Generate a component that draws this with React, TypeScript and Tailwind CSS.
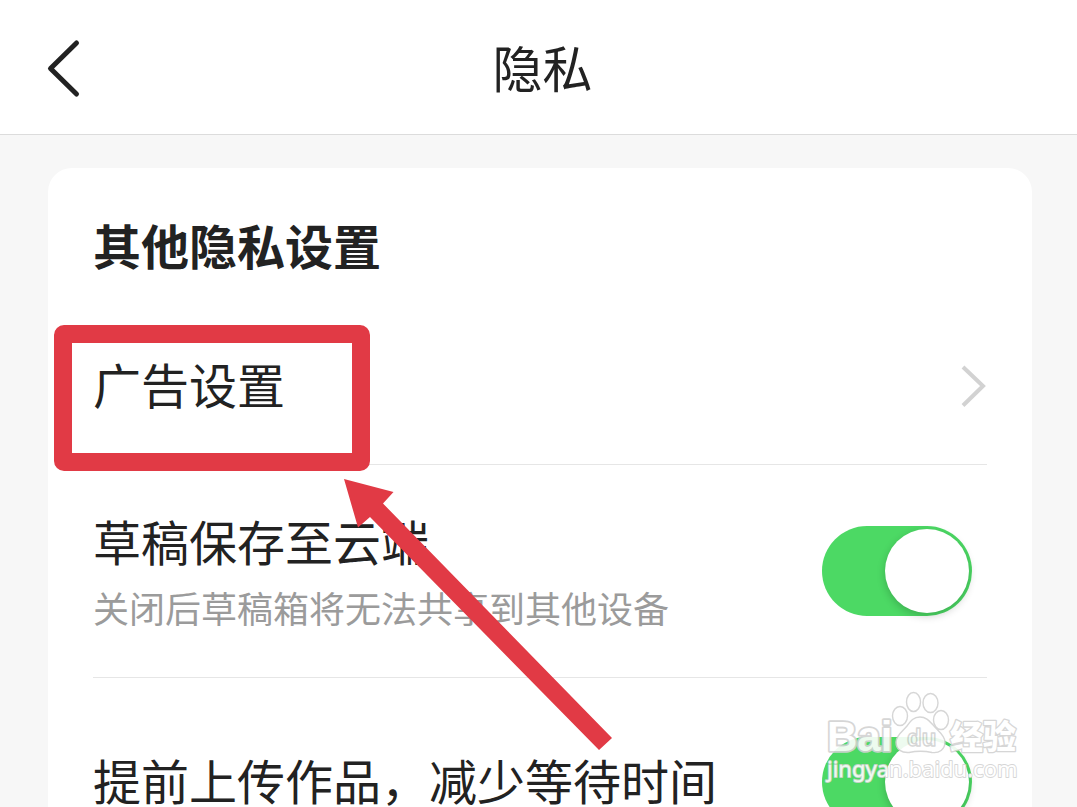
import type { ReactNode } from "react";

type RowProps = {
  id: string;
  title: string;
  hint?: string;
};

const Header = ({ children }: { children: ReactNode }) => (
  <header className="grid shrink-0 grid-cols-[1fr_auto_1fr] items-center border-b border-[#dcdcdc] bg-white pb-8 pl-11 pr-9 pt-[30px]">
    <button type="button" aria-label="返回" className="w-10 cursor-pointer">
      <svg viewBox="0 0 40 64" className="h-16 w-10" fill="none" stroke="#222" strokeWidth="5" strokeLinecap="round" strokeLinejoin="round">
        <path d="M32.5 9 6.5 34.5l26 25.5" />
      </svg>
    </button>
    <h1 className="text-[50px] leading-[72px]">{children}</h1>
  </header>
);

const SwitchRow = ({ id, title, hint }: RowProps) => (
  <li className="flex min-h-52 items-center justify-between border-b border-[#e6e6e6] py-[42px]">
    <label htmlFor={id} className="flex flex-col gap-1 whitespace-nowrap">
      <span className="pb-1.5 text-[48px] leading-[66px]">{title}</span>
      {hint && <span className="pb-1 text-[36px] leading-[48px] text-[#9b9b9b]">{hint}</span>}
    </label>
    <input
      id={id}
      type="checkbox"
      role="switch"
      defaultChecked
      className="mr-[15px] flex h-[90px] w-[150px] shrink-0 cursor-pointer appearance-none rounded-full bg-[#e5e5e5] p-[3px] before:block before:size-21 before:rounded-full before:bg-white before:shadow-[0_3px_8px_rgba(0,0,0,0.2)] before:content-[''] checked:justify-end checked:bg-[#4cd964]"
    />
  </li>
);

const Annotation = () => (
  <div className="pointer-events-none absolute left-0 top-0">
    <div className="absolute left-[54px] top-[325px] h-[146px] w-[316px] rounded-[10px] border-[18px] border-[#e13a45]" />
    <svg viewBox="0 0 270 273" className="absolute left-[343px] top-[478px] h-[273px] w-[270px]" fill="#e13a45">
      <path d="M1 1 50.5 14 40 25.500 269 260 256 272 27 39 15 49.500Z" />
    </svg>
  </div>
);

const Watermark = () => (
  <svg
    viewBox="0 0 200 100"
    className="pointer-events-none absolute bottom-[17px] right-[54px] h-[100px] w-[200px] opacity-90"
    fill="#fff"
    stroke="#d2d2d2"
    strokeWidth="1.4"
    strokeLinejoin="round"
    aria-hidden="true"
  >
    <ellipse cx="77" cy="26" rx="7.500" ry="9.500" />
    <ellipse cx="90.500" cy="12" rx="7" ry="9.500" />
    <ellipse cx="107.500" cy="13" rx="7.500" ry="9.500" />
    <ellipse cx="118" cy="30" rx="7.500" ry="9.500" />
    <path d="M97 27c-7 0-10 5-13 9-4 5-11 9-11 16 0 8 6 11 13 10.500 7-1.500 16-1.500 23 0 7 1 13-3 13-10.500 0-7-7-11-11-16-4-4-7-9-14-9Z" />
    <text x="4" y="61" fontSize="42" fontWeight="700" strokeWidth="3.600" paintOrder="stroke" fontFamily="Liberation Sans, sans-serif">
      Bai
    </text>
    <text x="84" y="56" fontSize="24" fontWeight="700" fontFamily="Liberation Sans, sans-serif">
      du
    </text>
    <text x="127" y="59" fontSize="33" fontWeight="900" strokeWidth="2.600" paintOrder="stroke" fontFamily="Noto Sans CJK SC, sans-serif">
      经验
    </text>
    <text x="4" y="87" fontSize="22" strokeWidth="1.800" paintOrder="stroke" fontFamily="Noto Sans, sans-serif">
      jingyan.baidu.com
    </text>
  </svg>
);

const App = () => {
  return (
    <div className="relative flex h-screen flex-col overflow-hidden bg-[#f7f7f7] font-['Noto_Sans_CJK_SC',sans-serif] text-[#222]">
      <Header>隐私</Header>

      <main className="ml-12 mr-[45px] mt-[33px] shrink-0 rounded-t-3xl bg-white px-[45px] pt-[43px]">
        <h2 className="pb-[31px] text-[48px] font-bold leading-[66px]">其他隐私设置</h2>
        <ul>
          <li className="border-b border-[#e6e6e6]">
            <a href="#ads" className="flex items-center justify-between py-[42px]">
              <span className="pb-1.5 text-[48px] leading-[66px]">广告设置</span>
              <svg viewBox="0 0 28 48" className="h-12 w-7" fill="none" stroke="#d2d2d2" strokeWidth="4">
                <path d="M4 5 24 24 4 43.500" />
              </svg>
            </a>
          </li>
          <SwitchRow id="cloud-draft" title="草稿保存至云端" hint="关闭后草稿箱将无法共享到其他设备" />
          <SwitchRow id="early-upload" title="提前上传作品，减少等待时间" />
        </ul>
      </main>

      <Annotation />
      <Watermark />
    </div>
  );
};

export default App;
